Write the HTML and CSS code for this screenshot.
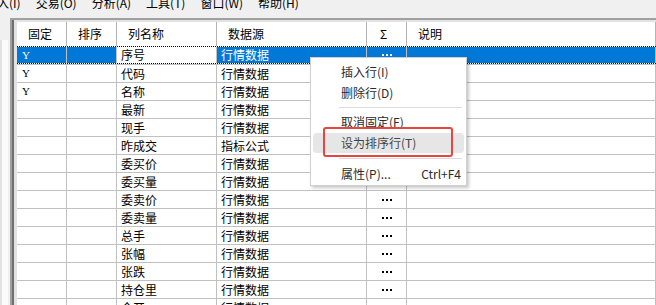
FILE: index.html
```html
<!DOCTYPE html>
<html lang="zh-CN">
<head>
    <meta charset="UTF-8">
    <title>列设置</title>
    <link rel="stylesheet" href="styles.css">
</head>
<body>

    <div class="menubar">
        <div class="menubar-items">
            <span>入(I)</span>
            <span>交易(O)</span>
            <span>分析(A)</span>
            <span>工具(T)</span>
            <span>窗口(W)</span>
            <span>帮助(H)</span>
        </div>
    </div>

    <div class="main">
        <div class="side"><div class="side-strip"></div></div>

        <div class="frame">
            <div class="row head">
                <div class="cell">固定</div>
                <div class="cell">排序</div>
                <div class="cell">列名称</div>
                <div class="cell">数据源</div>
                <div class="cell sum-head">Σ</div>
                <div class="cell">说明</div>
            </div>

            <div class="row sel">
                <div class="cell fix">Y</div><div class="cell"></div><div class="cell cur">序号</div><div class="cell">行情数据</div><div class="cell sum"><span class="dots"></span></div><div class="cell"></div>
            </div>
            <div class="row">
                <div class="cell fix">Y</div><div class="cell"></div><div class="cell">代码</div><div class="cell">行情数据</div><div class="cell sum"><span class="dots"></span></div><div class="cell"></div>
            </div>
            <div class="row">
                <div class="cell fix">Y</div><div class="cell"></div><div class="cell">名称</div><div class="cell">行情数据</div><div class="cell sum"><span class="dots"></span></div><div class="cell"></div>
            </div>
            <div class="row">
                <div class="cell fix"></div><div class="cell"></div><div class="cell">最新</div><div class="cell">行情数据</div><div class="cell sum"><span class="dots"></span></div><div class="cell"></div>
            </div>
            <div class="row">
                <div class="cell fix"></div><div class="cell"></div><div class="cell">现手</div><div class="cell">行情数据</div><div class="cell sum"><span class="dots"></span></div><div class="cell"></div>
            </div>
            <div class="row">
                <div class="cell fix"></div><div class="cell"></div><div class="cell">昨成交</div><div class="cell">指标公式</div><div class="cell sum"><span class="dots"></span></div><div class="cell"></div>
            </div>
            <div class="row">
                <div class="cell fix"></div><div class="cell"></div><div class="cell">委买价</div><div class="cell">行情数据</div><div class="cell sum"><span class="dots"></span></div><div class="cell"></div>
            </div>
            <div class="row">
                <div class="cell fix"></div><div class="cell"></div><div class="cell">委买量</div><div class="cell">行情数据</div><div class="cell sum"><span class="dots"></span></div><div class="cell"></div>
            </div>
            <div class="row">
                <div class="cell fix"></div><div class="cell"></div><div class="cell">委卖价</div><div class="cell">行情数据</div><div class="cell sum"><span class="dots"></span></div><div class="cell"></div>
            </div>
            <div class="row">
                <div class="cell fix"></div><div class="cell"></div><div class="cell">委卖量</div><div class="cell">行情数据</div><div class="cell sum"><span class="dots"></span></div><div class="cell"></div>
            </div>
            <div class="row">
                <div class="cell fix"></div><div class="cell"></div><div class="cell">总手</div><div class="cell">行情数据</div><div class="cell sum"><span class="dots"></span></div><div class="cell"></div>
            </div>
            <div class="row">
                <div class="cell fix"></div><div class="cell"></div><div class="cell">张幅</div><div class="cell">行情数据</div><div class="cell sum"><span class="dots"></span></div><div class="cell"></div>
            </div>
            <div class="row">
                <div class="cell fix"></div><div class="cell"></div><div class="cell">张跌</div><div class="cell">行情数据</div><div class="cell sum"><span class="dots"></span></div><div class="cell"></div>
            </div>
            <div class="row">
                <div class="cell fix"></div><div class="cell"></div><div class="cell">持仓里</div><div class="cell">行情数据</div><div class="cell sum"><span class="dots"></span></div><div class="cell"></div>
            </div>
            <div class="row">
                <div class="cell fix"></div><div class="cell"></div><div class="cell">今开</div><div class="cell">行情数据</div><div class="cell sum"><span class="dots"></span></div><div class="cell"></div>
            </div>
        </div>
    </div>

    <!-- right-click menu over the grid -->
    <div class="ctx">
        <div class="ctx-item"><span>插入行(I)</span></div>
        <div class="ctx-item"><span>删除行(D)</span></div>
        <div class="ctx-sep"></div>
        <div class="ctx-item"><span>取消固定(F)</span></div>
        <div class="ctx-item hover"><span>设为排序行(T)</span></div>
        <div class="ctx-sep sep2"></div>
        <div class="ctx-item"><span>属性(P)...</span><span>Ctrl+F4</span></div>
        <div class="ctx-mark"></div>
    </div>

</body>
</html>
```

FILE: styles.css
```css
* {
    box-sizing: border-box;
}
body {
    margin: 0;
    width: 656px;
    height: 305px;
    overflow: hidden;
    position: relative;
    background-color: #f0f0f0;
    font-family: "Noto Sans CJK SC", "Noto Sans", sans-serif;
    font-size: 12px;
    color: #000;
}
.menubar {
    height: 14px;
    overflow: hidden;
}
.menubar-items {
    display: flex;
    gap: 15px;
    margin: -4px 0 0 -3px;
    line-height: 14px;
    white-space: nowrap;
}
.main {
    display: flex;
    margin-top: 4px;
    height: 287px;
}
.side {
    width: 10px;
    flex-shrink: 0;
    display: flex;
    flex-direction: column;
}
.side-strip {
    margin-top: 22px;
    flex: 1;
    width: 8px;
    border-left: 2px solid #e2e2e2;
    background: #fbfbfb;
}
.frame {
    flex: 1;
    overflow: hidden;
    background: #fff;
    border-top: 2px solid #a0a0a0;
    border-left: 2px solid #a0a0a0;
    padding: 2px 0 0 5px;
    box-shadow: inset 2px 0 0 #6e6e6e, inset 5px 2px 0 #e3e3e3;
}
.row {
    display: grid;
    grid-template-columns: 50px 50px 100px 150px 40px 1fr;
    height: 18px;
}
.cell {
    border-right: 1px solid #c0c0c0;
    border-bottom: 1px solid #c0c0c0;
    padding-left: 4px;
    line-height: 17px;
    white-space: nowrap;
    overflow: hidden;
}
.head {
    height: 24px;
}
.head .cell {
    line-height: 24px;
    padding-left: 11px;
    border-bottom: none;
    border-right-color: #b4b4b4;
}
.head .sum-head {
    padding-left: 13px;
}
.fix {
    font-family: "Liberation Serif", serif;
    font-size: 11px;
    padding-left: 5px;
}
.sum {
    display: flex;
    align-items: center;
    justify-content: center;
    padding-left: 0;
}
.dots {
    width: 10px;
    height: 2px;
    background: linear-gradient(90deg, #000 2px, transparent 2px) 0 0 / 4px 2px repeat-x;
}
.sel {
    height: 19px;
    position: relative;
    background: #0078d7;
    color: #fff;
}
.sel .cell {
    line-height: 18px;
}
.sel .cur {
    background: #fff;
    color: #000;
}
.sel .dots {
    background-image: linear-gradient(90deg, #fff 2px, transparent 2px);
}
.sel::before,
.sel::after {
    content: "";
    position: absolute;
    left: 0;
    right: 0;
    height: 1px;
    background: repeating-linear-gradient(90deg, #000 0 1px, #fff 1px 2px);
}
.sel::before {
    top: 0;
}
.sel::after {
    bottom: 1px;
}

/* context menu */
.ctx {
    position: absolute;
    left: 310px;
    top: 57px;
    width: 157px;
    padding: 3px 0 1px;
    background: #fff;
    border: 1px solid #cfcfcf;
    box-shadow: 2px 2px 3px rgba(0, 0, 0, 0.22);
    color: #2b2b2b;
}
.ctx-item {
    display: flex;
    justify-content: space-between;
    height: 21px;
    line-height: 21px;
    margin: 0 2px;
    padding: 0 3px 0 28px;
    white-space: nowrap;
}
.ctx-item.hover {
    height: 20px;
    line-height: 20px;
    margin: 1px 2px;
    background: #e6e6e6;
    border-radius: 4px;
    color: #444;
}
.ctx-sep {
    height: 1px;
    margin: 4px 4px 3px 28px;
    background: #dcdcdc;
}
.ctx-sep.sep2 {
    margin-top: 5px;
    margin-bottom: 4px;
}
.ctx-mark {
    position: absolute;
    left: 12px;
    top: 69px;
    width: 130px;
    height: 30px;
    border: 2px solid #e8453f;
    border-radius: 3px;
}
```
